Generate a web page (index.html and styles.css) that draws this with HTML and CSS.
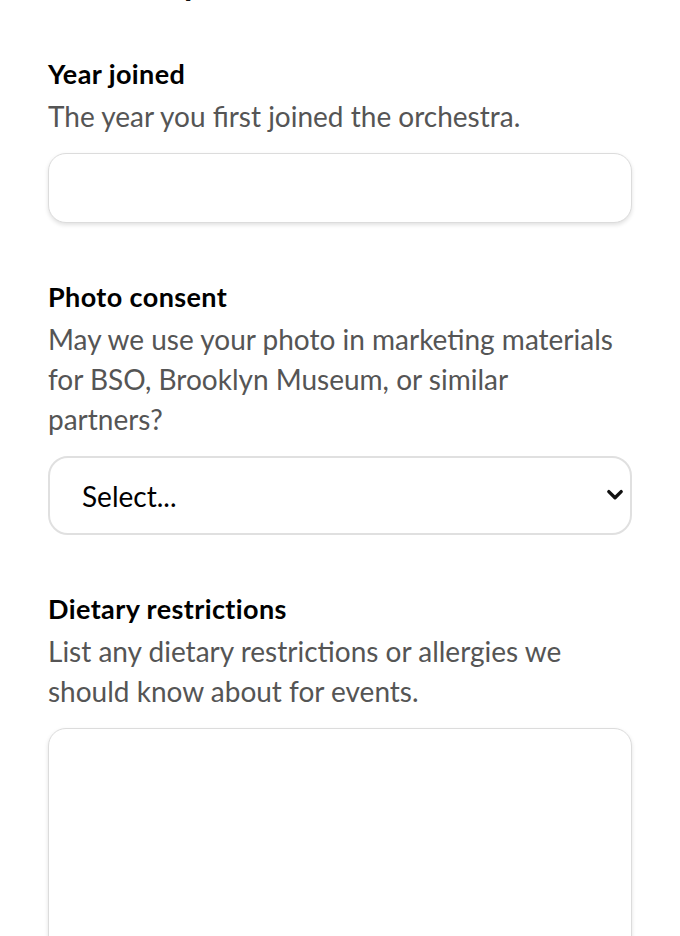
FILE: index.html
```html
<!DOCTYPE html>
<html lang="en">
<head>
  <meta charset="UTF-8">
  <title>Member profile</title>
  <link rel="stylesheet" href="styles.css">
</head>
<body>
  <form class="form">
    <h1 class="heading">Member profile</h1>

    <div class="field">
      <label class="label" for="year">Year joined</label>
      <p class="hint">The year you first joined the orchestra.</p>
      <input class="input" id="year" type="text">
    </div>

    <div class="field">
      <label class="label" for="photo">Photo consent</label>
      <p class="hint">May we use your photo in marketing materials for BSO, Brooklyn Museum, or similar partners?</p>
      <div class="select-wrap">
        <select class="select" id="photo">
          <option>Select...</option>
          <option>Yes</option>
          <option>No</option>
        </select>
        <svg class="chevron" viewBox="0 0 16 16" width="18" height="18" aria-hidden="true">
          <path d="M2.5 5 8 10.5 13.5 5" fill="none" stroke="#111" stroke-width="3" stroke-linecap="round" stroke-linejoin="round"/>
        </svg>
      </div>
    </div>

    <div class="field">
      <label class="label" for="diet">Dietary restrictions</label>
      <p class="hint">List any dietary restrictions or allergies we should know about for events.</p>
      <textarea class="input textarea" id="diet"></textarea>
    </div>
  </form>
</body>
</html>
```

FILE: styles.css
```css
body {
  margin: 0;
  background: #fff;
  font-family: Lato, "Noto Sans", sans-serif;
  color: #111;
}
.form {
  padding: 0 48px;
  margin-top: -36px;
}
.heading {
  font-size: 34px;
  line-height: 36px;
  font-weight: 700;
  margin: 0 0 56px;
}
.field {
  display: flex;
  flex-direction: column;
  margin-bottom: 56px;
}
.label {
  font-size: 27px;
  line-height: 36px;
  font-weight: 700;
  letter-spacing: 0.4px;
  color: #000;
  margin-bottom: 4px;
}
.hint {
  max-width: 572px;
  margin: 0 0 17px;
  font-size: 28px;
  line-height: 40px;
  color: #555;
}
.input {
  box-sizing: border-box;
  width: 100%;
  height: 70px;
  border: 1.5px solid #dcdcdc;
  border-radius: 18px;
  background: #fff;
  box-shadow: 0 2px 4px rgba(0, 0, 0, 0.12);
  font: inherit;
  font-size: 26px;
  padding: 0 32px;
}
.textarea {
  height: 260px;
  resize: none;
  padding: 20px 32px;
}
.select-wrap {
  position: relative;
}
.select {
  box-sizing: border-box;
  width: 100%;
  height: 79px;
  appearance: none;
  border: 2px solid #e0e0e0;
  border-radius: 20px;
  background: #fff;
  font: inherit;
  font-size: 28px;
  color: #000;
  padding: 0 32px;
}
.chevron {
  position: absolute;
  right: 8px;
  top: 30px;
  pointer-events: none;
}
```
